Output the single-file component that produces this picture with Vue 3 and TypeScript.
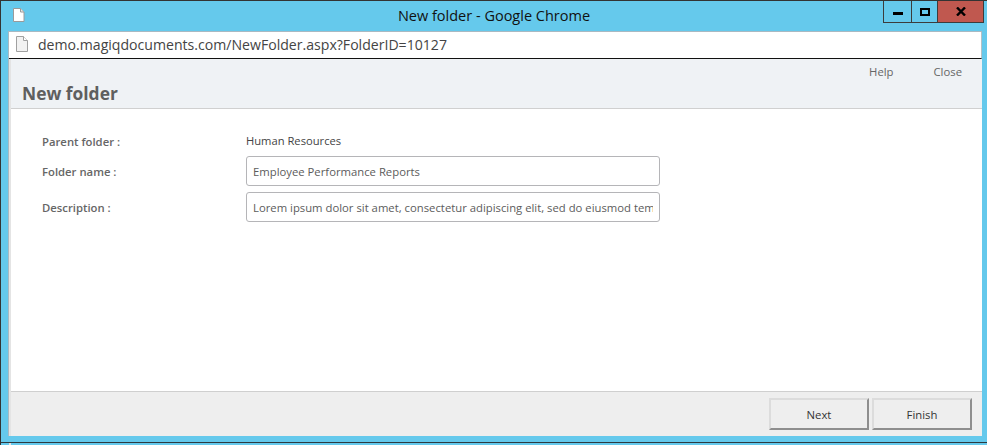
<template>
  <div class="window">
    <header class="titlebar">
      <svg class="page-icon" width="12" height="14" viewBox="0 0 12 14">
        <path d="M.5.5h7l3.500 3.500v9.500h-10.500z" fill="#fff" stroke="#9a9a9a" />
        <path d="M7.500.5v3.500h3.500" fill="#e8e8e8" stroke="#9a9a9a" />
      </svg>
      <span class="title">New folder - Google Chrome</span>
      <div class="controls">
        <button class="ctl ctl-min" type="button" aria-label="Minimize"><i></i></button>
        <button class="ctl ctl-max" type="button" aria-label="Maximize"><i></i></button>
        <button class="ctl ctl-close" type="button" aria-label="Close">
          <svg width="10" height="9" viewBox="0 0 10 9">
            <path d="M1 .5 9 8.500M9 .5 1 8.500" stroke="#000" stroke-width="2.400" fill="none" />
          </svg>
        </button>
      </div>
    </header>

    <div class="client">
      <div class="urlbar">
        <svg class="url-icon" width="12" height="16" viewBox="0 0 12 16">
          <path d="M.5.5h7l4 4v11h-11z" fill="#f2f2f2" stroke="#a0a0a0" />
          <path d="M7.500.5v4h4" fill="#fff" stroke="#a0a0a0" />
        </svg>
        <span class="url">demo.magiqdocuments.com/NewFolder.aspx?FolderID=10127</span>
      </div>

      <div class="page">
        <section class="head">
          <nav class="head-links">
            <a>Help</a>
            <a>Close</a>
          </nav>
          <h1>New folder</h1>
        </section>

        <main class="form">
          <div v-for="row in rows" :key="row.label" class="row">
            <label>{{ row.label }}</label>
            <div v-if="row.plain" class="plain">{{ row.value }}</div>
            <input v-else type="text" :value="row.value" readonly />
          </div>
        </main>

        <footer class="foot">
          <button type="button">Next</button>
          <button type="button">Finish</button>
        </footer>
      </div>
    </div>
  </div>
</template>

<script setup lang="ts">
const rows = [
  { label: 'Parent folder :', value: 'Human Resources', plain: true },
  { label: 'Folder name :', value: 'Employee Performance Reports', plain: false },
  {
    label: 'Description :',
    value: 'Lorem ipsum dolor sit amet, consectetur adipiscing elit, sed do eiusmod tempor incididunt ut labore',
    plain: false
  }
];
</script>

<style>
html,
body {
  margin: 0;
  background: #65c9ec;
}
</style>

<style scoped>
.window {
  box-sizing: border-box;
  width: 987px;
  height: 445px;
  display: flex;
  flex-direction: column;
  background: #65c9ec;
  border-top: 1px solid #333;
  border-left: 1px solid #333;
  font-family: "Open Sans", "Noto Sans", sans-serif;
  overflow: hidden;
  position: relative;
}

/* edge of the window behind this one */
.window::after {
  content: "";
  position: absolute;
  left: 0;
  right: 0;
  top: 441px;
  height: 1px;
  background: #2d3a40;
}

.window::before {
  content: "";
  position: absolute;
  left: 8px;
  top: 442px;
  width: 2px;
  height: 2px;
  background: #e4e4e4;
}

.titlebar {
  height: 30px;
  flex: none;
  display: flex;
  align-items: flex-start;
  position: relative;
}

.page-icon {
  margin: 7px 0 0 12px;
}

.title {
  position: absolute;
  left: 0;
  right: 0;
  top: 5px;
  text-align: center;
  font-size: 14.500px;
  line-height: 20px;
  color: #111;
}

.controls {
  position: absolute;
  top: 0;
  right: 3px;
  display: flex;
  height: 21px;
  border: 1px solid #3c3c3c;
  border-top: 0;
}

.ctl {
  padding: 0;
  border: 0;
  height: 21px;
  background: transparent;
  display: flex;
  align-items: center;
  justify-content: center;
}

.ctl-min {
  width: 28px;
  border-right: 1px solid #3c3c3c;
}

.ctl-min i {
  display: block;
  width: 10px;
  height: 3px;
  margin-top: 3px;
  background: #000;
}

.ctl-max {
  width: 26px;
  border-right: 1px solid #3c3c3c;
}

.ctl-max i {
  display: block;
  box-sizing: border-box;
  width: 10px;
  height: 8px;
  border: 2px solid #000;
}

.ctl-close {
  width: 45px;
  background: #c0584f;
}

.client {
  box-sizing: border-box;
  width: 974px;
  height: 405px;
  margin-left: 7px;
  flex: none;
  display: flex;
  flex-direction: column;
  border-top: 1px solid #a9b9c2;
  border-left: 1px solid #a9b9c2;
  background: #fff;
}

.urlbar {
  height: 27px;
  flex: none;
  box-sizing: border-box;
  padding-bottom: 2px;
  display: flex;
  align-items: center;
  border-bottom: 1px solid #111;
  border-right: 1px solid #b5c0c6;
  background: #fff;
}

.url-icon {
  margin-left: 7px;
}

.url {
  margin-left: 10px;
  font-size: 14.100px;
  color: #444;
}

.page {
  flex: 1;
  min-height: 0;
  display: flex;
  flex-direction: column;
  border-left: 2px solid #e4e4e4;
  font-size: 11.300px;
  color: #555;
}

.head {
  height: 50px;
  flex: none;
  box-sizing: border-box;
  background: #eff2f5;
  border-bottom: 1px solid #d0d0d0;
  position: relative;
}

.head-links {
  display: flex;
  justify-content: flex-end;
  gap: 40px;
  padding: 5px 20px 0 0;
  line-height: 16px;
  color: #666;
}

h1 {
  margin: 0;
  padding: 1px 0 0 11px;
  font-size: 17.400px;
  line-height: 24px;
  font-weight: 700;
  color: #5f5f5f;
}

.form {
  flex: 1;
  min-height: 0;
  padding: 23px 0 0 31px;
  display: flex;
  flex-direction: column;
  gap: 6px;
}

.row {
  display: flex;
  align-items: center;
}

.row label {
  width: 204px;
  font-size: 11.300px;
  font-weight: 600;
  color: #666;
}

.plain {
  height: 18px;
  line-height: 18px;
  font-size: 11.200px;
  color: #444;
}

.row input {
  box-sizing: border-box;
  width: 414px;
  height: 30px;
  padding: 0 6px;
  border: 1px solid #b5b5b8;
  border-radius: 3px;
  font: inherit;
  color: #5c5c5c;
  outline: none;
}

.foot {
  height: 45px;
  flex: none;
  box-sizing: border-box;
  background: #eee;
  border-top: 1px solid #cfcfcf;
  display: flex;
  justify-content: flex-end;
  gap: 3px;
  padding: 6px 10px 0 0;
}

.foot button {
  box-sizing: border-box;
  width: 100px;
  height: 32px;
  border: 2px solid;
  border-color: #dcdcdc #8e8e8e #8e8e8e #dcdcdc;
  background: #eee;
  font: inherit;
  color: #333;
}
</style>
